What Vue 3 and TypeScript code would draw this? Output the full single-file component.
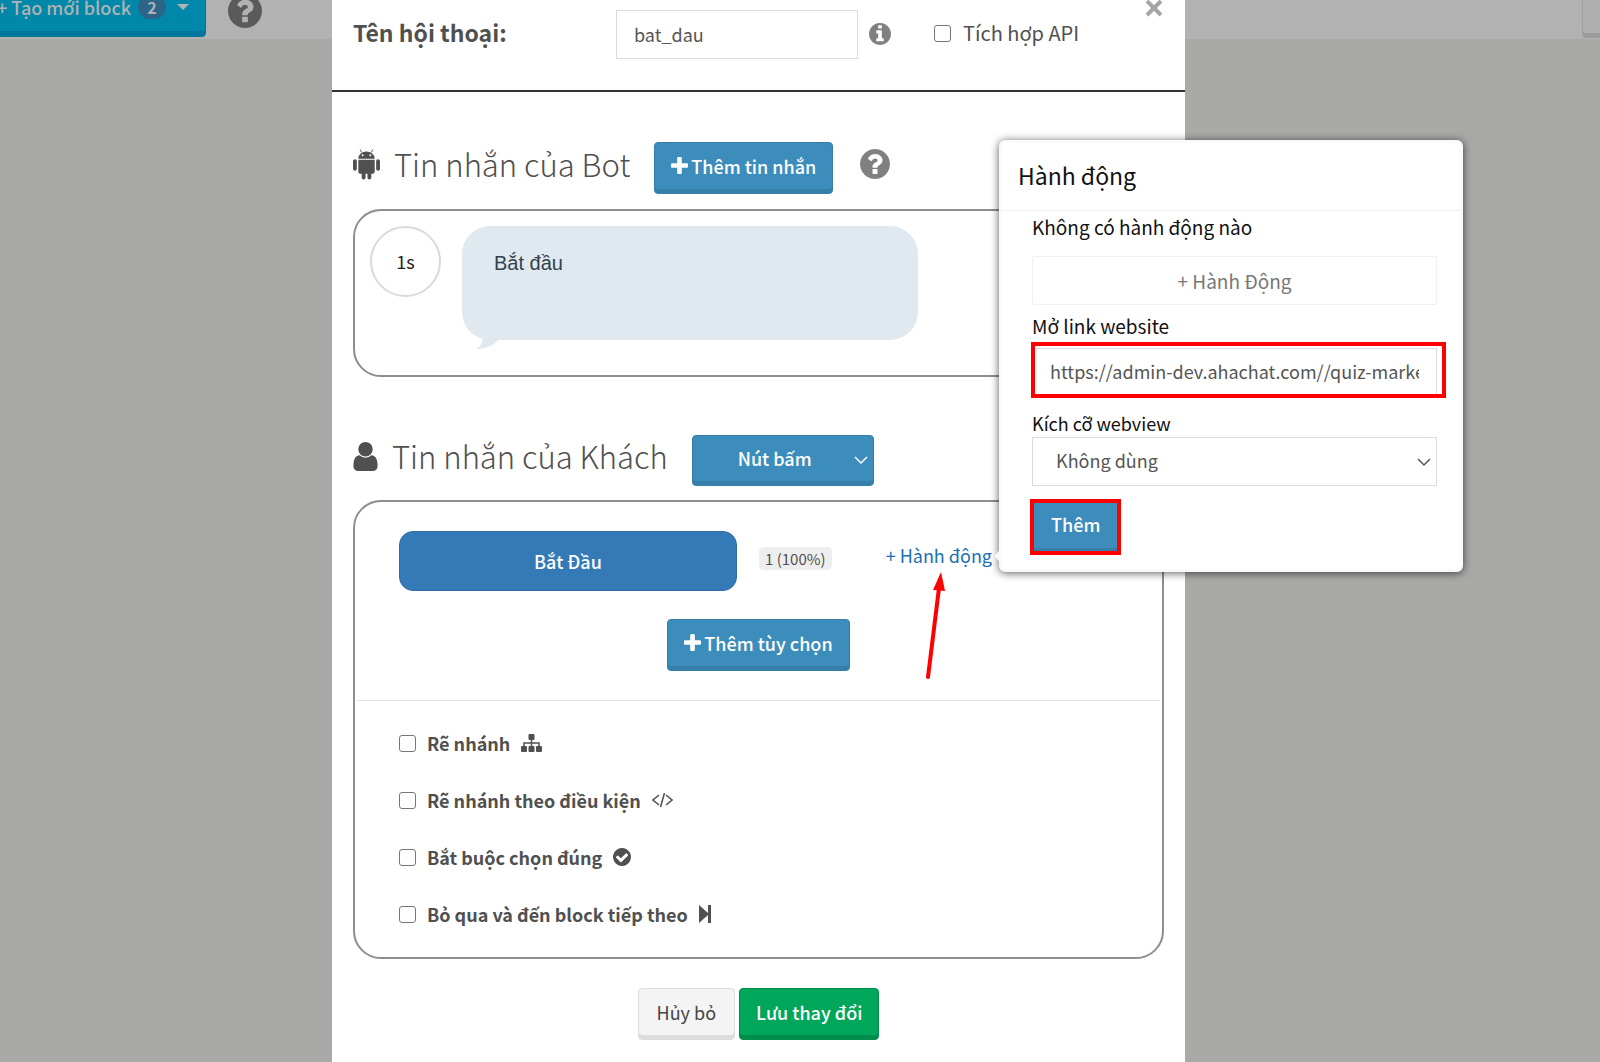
<script setup lang="ts">
import { ref } from 'vue'

interface BranchOption {
  id: string
  label: string
  icon: 'sitemap' | 'code' | 'check' | 'next'
  checked: boolean
}

const dialogName = ref('bat_dau')
const useApi = ref(false)
const replyType = ref('Nút bấm')
const link = ref('https://admin-dev.ahachat.com//quiz-marketing')
const webview = ref('Không dùng')

const options = ref<BranchOption[]>([
  { id: 'branch', label: 'Rẽ nhánh', icon: 'sitemap', checked: false },
  { id: 'condition', label: 'Rẽ nhánh theo điều kiện', icon: 'code', checked: false },
  { id: 'force', label: 'Bắt buộc chọn đúng', icon: 'check', checked: false },
  { id: 'skip', label: 'Bỏ qua và đến block tiếp theo', icon: 'next', checked: false },
])

const disc = 'm640 416q0 209-103 385.5t-279.5 279.5-385.5 103-385.5-103-279.5-279.5-103-385.5 103-385.5 279.5-279.5 385.5-103 385.5 103 279.5 279.5 103 385.5z'
const infoPath = 'M1152 1376v-160q0-14-9-23t-23-9h-96v-512q0-14-9-23t-23-9h-320q-14 0-23 9t-9 23v160q0 14 9 23t23 9h96v320h-96q-14 0-23 9t-9 23v160q0 14 9 23t23 9h448q14 0 23-9t9-23zm-128-896v-160q0-14-9-23t-23-9h-192q-14 0-23 9t-9 23v160q0 14 9 23t23 9h192q14 0 23-9t9-23z' + disc
const helpPath = 'M1024 1376v-192q0-14-9-23t-23-9h-192q-14 0-23 9t-9 23v192q0 14 9 23t23 9h192q14 0 23-9t9-23zm256-672q0-88-55.5-163t-138.5-116-170-41q-243 0-371 213-15 24 8 42l132 100q7 6 19 6 16 0 25-12 53-68 86-92 34-24 86-24 48 0 85.5 26t37.5 59q0 38-20 61t-68 45q-63 28-115.5 86.5t-52.5 125.5v36q0 14 9 23t23 9h192q14 0 23-9t9-23q0-19 21.5-49.5t54.5-49.5q32-18 49-28.5t46-35 44.5-48 28-60.5 12.5-81zm384 192q0 209-103 385.5t-279.5 279.5-385.5 103-385.5-103-279.5-279.5-103-385.5 103-385.5 279.5-279.5 385.5-103 385.5 103 279.5 279.5 103 385.5z'
const checkPath = 'M1412 734q0-28-18-46l-91-90q-19-19-45-19t-45 19l-408 407-226-226q-19-19-45-19t-45 19l-91 90q-18 18-18 46 0 27 18 45l362 362q19 19 45 19 27 0 46-19l543-543q18-18 18-45zm252 162q0 209-103 385.5t-279.5 279.5-385.5 103-385.5-103-279.5-279.5-103-385.5 103-385.5 279.5-279.5 385.5-103 385.5 103 279.5 279.5 103 385.5z'
const plusPath = 'M1600 736v192q0 40-28 68t-68 28h-416v416q0 40-28 68t-68 28h-192q-40 0-68-28t-28-68v-416h-416q-40 0-68-28t-28-68v-192q0-40 28-68t68-28h416v-416q0-40 28-68t68-28h192q40 0 68 28t28 68v416h416q40 0 68 28t28 68z'
const userPath = 'M1536 1399q0 109-62.5 187t-150.5 78h-854q-88 0-150.5-78t-62.5-187q0-85 8.5-160.5t31.5-152 58.5-131 94-89 134.5-34.5q131 128 313 128t313-128q76 0 134.5 34.5t94 89 58.5 131 31.5 152 8.5 160.5zm-256-887q0 159-112.5 271.5t-271.5 112.5-271.5-112.5-112.5-271.5 112.5-271.5 271.5-112.5 271.5 112.5 112.5 271.5z'
</script>

<template>
  <div class="page">
    <header class="topbar">
      <button class="btn create" type="button">
        <span>+ Tạo mới block</span>
        <span class="count">2</span>
        <svg class="caret" viewBox="0 0 12 6"><path d="M0 0h12L6 6z" /></svg>
      </button>
      <svg class="top-help" viewBox="128 128 1536 1536"><path :d="helpPath" /></svg>
      <button class="edge" type="button" aria-label="Menu"></button>
    </header>

    <main class="modal" role="dialog" aria-label="Hội thoại">
      <div class="head">
        <label class="name-label" for="name">Tên hội thoại:</label>
        <input id="name" v-model="dialogName" class="field name" type="text" />
        <svg class="info" viewBox="128 128 1536 1536"><path :d="infoPath" /></svg>
        <label class="api"><input v-model="useApi" class="box" type="checkbox" />Tích hợp API</label>
        <button class="close" type="button" aria-label="Đóng">
          <svg viewBox="0 0 18 18"><path d="M2 1l14 14M16 1L2 15" /></svg>
        </button>
      </div>

      <section class="bot">
        <div class="title-row">
          <svg class="android" viewBox="0 0 28 32">
            <path d="M5.500 10.500a8.500 7.500 0 0 1 17 0z" />
            <path d="M9 4L7.500 1M19 4L20.500 1" class="antenna" />
            <path d="M5.500 11.500h17V24a2 2 0 0 1-2 2H19v4a2 2 0 0 1-4 0v-4h-2v4a2 2 0 0 1-4 0v-4H7.500a2 2 0 0 1-2-2z" />
            <rect x="0" y="11" width="4" height="12" rx="2" />
            <rect x="24" y="11" width="4" height="12" rx="2" />
            <circle cx="10" cy="7" r="1" class="eye" /><circle cx="18" cy="7" r="1" class="eye" />
          </svg>
          <h2>Tin nhắn của Bot</h2>
          <button class="btn" type="button">
            <svg class="plus" viewBox="192 128 1408 1408"><path :d="plusPath" /></svg>Thêm tin nhắn
          </button>
          <svg class="help" viewBox="128 128 1536 1536"><path :d="helpPath" /></svg>
        </div>
        <div class="panel message">
          <div class="delay">1s</div>
          <div class="bubble">
            Bắt đầu
            <svg class="tail" viewBox="0 0 22 12"><path d="M7 0C7 5 5 9 0 12C9 12 17 9 22 3V0z" /></svg>
          </div>
        </div>
      </section>

      <section class="guest">
        <div class="title-row">
          <svg class="user" viewBox="256 128 1280 1536"><path :d="userPath" /></svg>
          <h2>Tin nhắn của Khách</h2>
          <div class="pick">
            <select v-model="replyType" class="btn reply" aria-label="Loại trả lời">
              <option>Nút bấm</option>
            </select>
            <svg class="chev" viewBox="0 0 14 10"><path d="M1 2l6 6 6-6" /></svg>
          </div>
        </div>
        <div class="panel">
          <div class="answer">
            <button class="choice" type="button">Bắt Đầu</button>
            <span class="rate">1 (100%)</span>
            <div class="action">
              <a href="#">+ Hành động</a>
              <svg class="arrow" viewBox="0 0 22 110">
                <path d="M3 106L14 17" class="shaft" />
                <path d="M16 1L20 20 8 19z" />
              </svg>

              <aside class="popover">
                <h3>Hành động</h3>
                <div class="pop-body">
                  <p>Không có hành động nào</p>
                  <button class="add-action" type="button">+ Hành Động</button>
                  <label class="link-label" for="link">Mở link website</label>
                  <div class="mark mark-link">
                    <input id="link" v-model="link" class="field" type="text" />
                  </div>
                  <label class="view-label" for="webview">Kích cỡ webview</label>
                  <div class="pick">
                    <select id="webview" v-model="webview" class="field view">
                      <option>Không dùng</option>
                    </select>
                    <svg class="chev" viewBox="0 0 14 10"><path d="M1 2l6 6 6-6" /></svg>
                  </div>
                  <div class="mark mark-add"><button class="btn" type="button">Thêm</button></div>
                </div>
              </aside>
            </div>
          </div>
          <div class="more">
            <button class="btn" type="button">
              <svg class="plus" viewBox="192 128 1408 1408"><path :d="plusPath" /></svg>Thêm tùy chọn
            </button>
          </div>
          <div class="options">
            <label v-for="o in options" :key="o.id" class="option">
              <input v-model="o.checked" class="box" type="checkbox" />
              <span>{{ o.label }}</span>
              <svg v-if="o.icon === 'sitemap'" width="21" height="18" viewBox="0 0 21 18">
                <rect x="7.500" y="0" width="6" height="6" rx="1" />
                <rect x="0" y="12" width="6" height="6" rx="1" />
                <rect x="7.500" y="12" width="6" height="6" rx="1" />
                <rect x="15" y="12" width="6" height="6" rx="1" />
                <path d="M10.500 6v6M3 12V9h15v3" class="wire" />
              </svg>
              <svg v-else-if="o.icon === 'code'" width="21" height="16" viewBox="0 0 21 16">
                <path d="M7 3L1 8l6 5M14 3l6 5-6 5M12.500 1l-4 14" class="wire" />
              </svg>
              <svg v-else-if="o.icon === 'check'" width="18" height="18" viewBox="128 128 1536 1536"><path :d="checkPath" /></svg>
              <svg v-else width="12" height="18" viewBox="0 0 12 18"><path d="M0 0l9 8V0h3v18H9v-8l-9 8z" /></svg>
            </label>
          </div>
        </div>
      </section>

      <footer class="foot">
        <button class="btn cancel" type="button">Hủy bỏ</button>
        <button class="btn save" type="button">Lưu thay đổi</button>
      </footer>
    </main>
  </div>
</template>

<style>
body {
  margin: 0;
  background: #a9a9a7;
}
</style>

<style scoped>
.page,
.page * {
  box-sizing: border-box;
}
.page {
  display: grid;
  grid-template-columns: 332fr 853fr 415fr;
  min-height: 100vh;
  overflow: hidden;
  font-family: "Noto Sans CJK SC", "Noto Sans", sans-serif;
  font-size: 18px;
  line-height: 28px;
  color: #505050;
}
button,
input,
select {
  font: inherit;
  color: inherit;
}
svg {
  display: block;
  flex: none;
  fill: currentColor;
}
h2,
h3,
p {
  margin: 0;
  font-weight: 400;
}
.topbar {
  grid-area: 1 / 1 / 2 / 4;
  align-self: start;
  display: flex;
  align-items: flex-end;
  height: 39px;
  background: #b2b2b2;
}
.btn {
  display: flex;
  align-items: center;
  height: 52px;
  padding: 0 16px 5px;
  border: 1px solid #367fa9;
  border-radius: 4px;
  background: #3c8dbc;
  box-shadow: inset 0 -4px 0 #367fa9;
  color: #fff;
  font-weight: 500;
  white-space: nowrap;
}
.create {
  margin: 0 22px 2px -20px;
  padding-bottom: 8px;
  gap: 7px;
  border-color: #007a98;
  background: #0088aa;
  box-shadow: inset 0 -5px 0 #00769a;
  color: #b2b2b2;
  line-height: 18px;
}
.count {
  width: 28px;
  border-radius: 14px;
  background: #2b6589;
  font-size: 16px;
  line-height: 24px;
  font-weight: 700;
  text-align: center;
}
.caret {
  width: 12px;
  height: 6px;
  margin-left: 4px;
}
.top-help {
  width: 34px;
  height: 34px;
  margin-bottom: 11px;
  color: #5a5a5a;
}
.edge {
  width: 18px;
  height: 52px;
  margin: 0 0 1px auto;
  padding: 0;
  border: 0;
  border-left: 1px solid #9f9f9f;
  border-radius: 0 0 0 4px;
  background: #b0b0b0;
  box-shadow: inset 0 -5px 0 #9b9b9b;
}
.modal {
  grid-area: 1 / 2 / 2 / 3;
  background: #fff;
}
.head {
  display: flex;
  align-items: center;
  height: 92px;
  padding: 0 21px 22px;
  border-bottom: 2px solid #333;
}
.name-label {
  flex: 0 0 263px;
  margin-bottom: 4px;
  font-size: 23px;
  font-weight: 700;
}
.field {
  display: block;
  width: 100%;
  height: 49px;
  padding: 0 17px;
  border: 1px solid #d9dae6;
  border-radius: 0;
  background: #fff;
  outline: 0;
  color: #555;
}
.name {
  width: 242px;
}
.info {
  width: 22px;
  height: 22px;
  margin: 0 43px 0 11px;
  color: #808080;
}
.box {
  appearance: none;
  flex: none;
  width: 17px;
  height: 17px;
  margin: 0;
  border: 1px solid #767676;
  border-radius: 3px;
  background: #fff;
}
.api {
  display: flex;
  align-items: center;
  gap: 12px;
  margin-bottom: 2px;
  font-size: 20px;
}
.close {
  align-self: flex-start;
  margin: 0 1px 0 auto;
  padding: 0;
  border: 0;
  background: none;
  color: #a5a5a5;
}
.close svg {
  width: 18px;
  height: 18px;
  stroke: currentColor;
  stroke-width: 4;
}
section {
  padding: 0 21px;
}
.title-row {
  display: flex;
  align-items: center;
  height: 52px;
  margin-bottom: 15px;
}
.title-row > h2,
.title-row > svg {
  margin-bottom: 8px;
}
.bot {
  padding-top: 50px;
}
.guest {
  padding-top: 57px;
}
.guest .title-row {
  margin-bottom: 14px;
}
h2 {
  margin: 0 24px 0 14px;
  font-size: 31px;
  line-height: 44px;
  font-weight: 300;
  white-space: nowrap;
}
.android {
  width: 27px;
  height: 32px;
}
.antenna {
  fill: none;
  stroke: currentColor;
}
.eye {
  fill: #fff;
}
.user {
  width: 25px;
  height: 29px;
}
.plus {
  width: 17px;
  height: 17px;
  margin-right: 3px;
}
.help {
  width: 30px;
  height: 30px;
  margin-left: 27px;
  color: #808080;
}
.panel {
  border: 2px solid #8e8e8e;
  border-radius: 28px;
}
.message {
  display: flex;
  align-items: flex-start;
  gap: 21px;
  height: 168px;
  padding: 15px;
}
.delay {
  width: 71px;
  border: 2px solid #dadada;
  border-radius: 50%;
  line-height: 67px;
  text-align: center;
  color: #222;
}
.bubble {
  position: relative;
  width: 456px;
  height: 114px;
  padding: 23px 32px;
  border-radius: 28px;
  background: #e0e9f0;
  color: #33414c;
  font: 20px/28px "Liberation Sans", Arial, sans-serif;
}
.tail {
  position: absolute;
  top: 111px;
  left: 14px;
  width: 22px;
  height: 12px;
  color: #e0e9f0;
}
.pick {
  position: relative;
}
.pick select {
  appearance: none;
}
.chev {
  position: absolute;
  top: 20px;
  right: 6px;
  width: 14px;
  height: 10px;
  fill: none;
  stroke: #555;
  stroke-width: 1.5;
  pointer-events: none;
}
.reply {
  width: 182px;
  height: 51px;
  padding: 0 18px 5px 45px;
}
.reply + .chev {
  stroke: #fff;
}
.answer {
  display: flex;
  align-items: center;
  padding: 29px 0 0 44px;
}
.choice {
  width: 338px;
  height: 60px;
  padding: 0;
  border: 1px solid #2e6da4;
  border-radius: 14px;
  background: #337ab7;
  color: #fff;
  font-weight: 500;
}
.rate {
  margin: 0 0 6px 22px;
  padding: 0 6px;
  border-radius: 5px;
  background: #eee;
  font-size: 15px;
  line-height: 23px;
}
.action {
  position: relative;
  margin: 0 auto 12px 54px;
}
.action > a {
  display: block;
  color: #1b6fb5;
  text-decoration: none;
  white-space: nowrap;
}
.arrow {
  position: absolute;
  top: 30px;
  left: 39px;
  width: 22px;
  height: 110px;
  color: #f00;
}
.shaft {
  stroke: #f00;
  stroke-width: 4;
  stroke-linecap: round;
}
.popover {
  position: absolute;
  bottom: -3px;
  left: calc(100% + 7px);
  width: 464px;
  height: 432px;
  border: 3px solid #fafafa;
  border-radius: 6px;
  background: #fff;
  box-shadow: 0 1px 8px rgba(0, 0, 0, 0.65);
  color: #111;
}
.popover::before {
  content: "";
  position: absolute;
  bottom: 7px;
  left: -8px;
  border: solid transparent;
  border-width: 6px 6px 6px 0;
  border-right-color: #fafafa;
}
h3 {
  height: 68px;
  padding: 16px;
  border-bottom: 1px solid #eef0f5;
  font-size: 23px;
  line-height: 32px;
}
.pop-body {
  display: flex;
  flex-direction: column;
  padding: 2px 23px 0 30px;
}
.pop-body p,
.link-label,
.add-action {
  font-size: 19px;
}
.add-action {
  height: 49px;
  margin: 15px 0 7px;
  border: 1px solid #eff0f5;
  border-radius: 2px;
  background: #fff;
  color: #777;
}
.pop-body .field {
  padding-bottom: 3px;
}
.mark {
  position: relative;
}
.mark::after {
  content: "";
  position: absolute;
  border: 4px solid #f00;
  pointer-events: none;
}
.mark-link {
  margin-top: 8px;
}
.mark-link::after {
  inset: -6px -9px -1px -1px;
}
.view-label {
  margin-top: 12px;
}
.pop-body .view {
  padding-left: 23px;
}
.mark-add {
  align-self: flex-start;
  margin-top: 15px;
}
.mark-add::after {
  inset: -2px;
}
.mark-add .btn {
  padding: 0 18px 7px;
}
.more {
  display: flex;
  justify-content: center;
  margin: 0 2px;
  padding: 28px 0 29px;
  border-bottom: 1px solid #e4e4e4;
}
.options {
  padding: 28px 44px 29px;
}
.option {
  display: flex;
  align-items: center;
  gap: 11px;
  width: fit-content;
  margin-bottom: 29px;
  font-weight: 700;
}
.option:last-child {
  margin-bottom: 0;
}
.wire {
  fill: none;
  stroke: currentColor;
  stroke-width: 1.5;
}
.foot {
  display: flex;
  justify-content: center;
  gap: 4px;
  padding: 29px 0 22px;
}
.cancel {
  padding: 0 18px 5px;
  border-color: #ddd;
  background: #f4f4f4;
  box-shadow: inset 0 -4px 0 #ddd;
  color: #444;
  font-weight: 400;
}
.save {
  border-color: #008d4c;
  background: #00a65a;
  box-shadow: inset 0 -4px 0 #008d4c;
}
</style>
